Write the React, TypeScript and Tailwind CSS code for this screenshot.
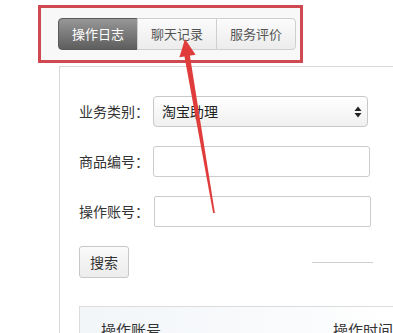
const TABS = [
  { label: "操作日志", active: true },
  { label: "聊天记录", active: false },
  { label: "服务评价", active: false },
];

const FONT = { fontFamily: '"Noto Sans CJK SC", "Noto Sans", sans-serif' };

function SortArrows() {
  return (
    <svg width="8" height="12" viewBox="0 0 8 12" className="shrink-0">
      <path d="M4 0.5 L7.5 5 L0.5 5 Z" fill="#222" />
      <path d="M4 11.5 L7.5 7 L0.5 7 Z" fill="#222" />
    </svg>
  );
}

function Row({ label, children }: { label: string; children: React.ReactNode }) {
  return (
    <div className="flex items-center">
      <span className="w-[74px] shrink-0 text-[14px] text-[#333]">{label}</span>
      {children}
    </div>
  );
}

export default function App() {
  return (
    <div className="relative h-[333px] w-[393px] overflow-hidden bg-white" style={FONT}>
      <div className="ml-[38px] mt-[5px] h-[58px] w-[265px] border-[3px] border-[#cf4a50] bg-[#f8f8f8] pl-[17px] pt-[10px]">
        <div className="flex h-[32px] w-[238px]">
          {TABS.map((tab, i) => (
            <div
              key={tab.label}
              className={`flex flex-1 items-center justify-center border text-[13px] ${
                tab.active
                  ? "rounded-l-[4px] border-[#5a5a5a] bg-gradient-to-b from-[#979797] to-[#5e5e5e] text-white"
                  : "border-[#cfcfcf] bg-gradient-to-b from-[#fbfbfb] to-[#ececec] text-[#555]"
              } ${i > 0 ? "-ml-px" : ""} ${i === TABS.length - 1 ? "rounded-r-[4px]" : ""}`}
            >
              {tab.label}
            </div>
          ))}
        </div>
      </div>

      <div className="ml-[59px] mt-[3px] border-l border-t border-[#d8d8d8] pl-[19px] pt-[29px]">
        <div className="flex flex-col gap-[19px]">
          <Row label="业务类别：">
            <div className="flex h-[31px] w-[215px] items-center justify-between rounded-[4px] border border-[#c8c8c8] bg-gradient-to-b from-[#ffffff] to-[#f0f0f0] pl-[8px] pr-[5px] text-[14px] text-[#222]">
              <span>淘宝助理</span>
              <SortArrows />
            </div>
          </Row>
          <Row label="商品编号：">
            <div className="h-[31px] w-[217px] rounded-[3px] border border-[#cccccc] bg-white" />
          </Row>
          <Row label="操作账号：">
            <div className="ml-px h-[31px] w-[217px] rounded-[2px] border border-[#cccccc] bg-white" />
          </Row>
        </div>

        <div className="mt-[19px] flex items-center pr-[20px]">
          <div className="flex h-[32px] w-[50px] items-center justify-center rounded-[3px] border border-[#c8c8c8] bg-gradient-to-b from-[#fafafa] to-[#ececec] text-[14px] text-[#333]">
            搜索
          </div>
          <div className="ml-auto h-px w-[61px] bg-[#d0d0d0]" />
        </div>

        <div className="mt-[28px] flex h-[40px] border-l border-t border-[#dcdcdc] bg-gradient-to-r from-[#f3f6f9] via-[#f7f9fb] to-white pt-[12px] text-[15px] text-[#333]">
          <span className="ml-[21px]">操作账号</span>
          <span className="ml-[172px]">操作时间</span>
        </div>
      </div>

      <svg
        className="pointer-events-none absolute left-0 top-0"
        width="393"
        height="333"
        viewBox="0 0 393 333"
      >
        <polygon points="184.3,55.4 189.7,54.6 214.9,212.9 213.1,213.1" fill="#e03c3c" />
        <polygon points="185,39 195.6,54.7 179.4,57.3" fill="#e03c3c" />
      </svg>
    </div>
  );
}
